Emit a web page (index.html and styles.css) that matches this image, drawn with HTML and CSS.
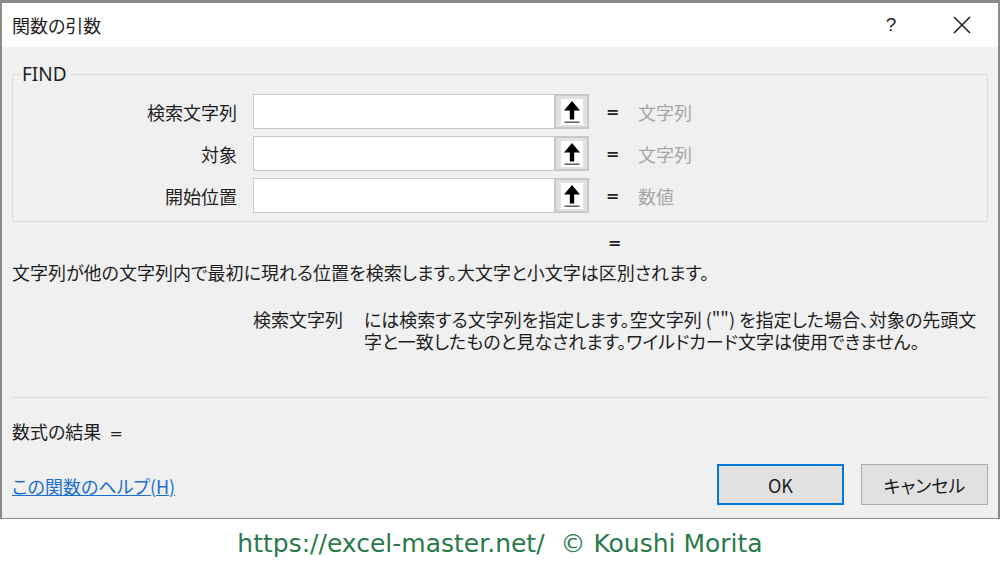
FILE: index.html
```html
<!DOCTYPE html>
<html lang="ja">
<head>
    <meta charset="UTF-8">
    <title>関数の引数</title>
    <link rel="stylesheet" href="styles.css">
</head>
<body>
    <div class="dialog">
        <div class="titlebar">
            <span class="title">関数の引数</span>
            <span class="help">?</span>
            <span class="close">
                <svg width="18" height="18" viewBox="0 0 18 18"><path d="M1 1L17 17M17 1L1 17" stroke="#222" stroke-width="1.6" fill="none"/></svg>
            </span>
        </div>
        <div class="content">
            <fieldset class="group">
                <legend>FIND</legend>
                <div class="arg-row">
                    <label>検索文字列</label>
                    <div class="field"><span class="box"></span><span class="ref-btn"><svg class="ref-icon" viewBox="0 0 22 26"><rect width="22" height="26" fill="#fff"/><path d="M11 2L3 11.5H8.8V20.5H13.2V11.5H19Z" fill="#000"/><rect x="3.5" y="22.5" width="15" height="1.4" fill="#555"/></svg></span></div>
                    <span class="eq">=</span>
                    <span class="type">文字列</span>
                </div>
                <div class="arg-row">
                    <label>対象</label>
                    <div class="field"><span class="box"></span><span class="ref-btn"><svg class="ref-icon" viewBox="0 0 22 26"><rect width="22" height="26" fill="#fff"/><path d="M11 2L3 11.5H8.8V20.5H13.2V11.5H19Z" fill="#000"/><rect x="3.5" y="22.5" width="15" height="1.4" fill="#555"/></svg></span></div>
                    <span class="eq">=</span>
                    <span class="type">文字列</span>
                </div>
                <div class="arg-row">
                    <label>開始位置</label>
                    <div class="field"><span class="box"></span><span class="ref-btn"><svg class="ref-icon" viewBox="0 0 22 26"><rect width="22" height="26" fill="#fff"/><path d="M11 2L3 11.5H8.8V20.5H13.2V11.5H19Z" fill="#000"/><rect x="3.5" y="22.5" width="15" height="1.4" fill="#555"/></svg></span></div>
                    <span class="eq">=</span>
                    <span class="type">数値</span>
                </div>
            </fieldset>

            <div class="total-eq">=</div>
            <p class="desc">文字列が他の文字列内で最初に現れる位置を検索します。大文字と小文字は区別されます。</p>

            <div class="arg-desc">
                <span class="arg-name">検索文字列</span>
                <span class="arg-text">には検索する文字列を指定します。空文字列 ("") を指定した場合、対象の先頭文字と一致したものと見なされます。ワイルドカード文字は使用できません。</span>
            </div>

            <div class="separator"></div>

            <div class="result">数式の結果 <span class="result-eq">=</span></div>

            <div class="footer-row">
                <a href="#" class="help-link">この関数のヘルプ(H)</a>
                <div class="buttons">
                    <button class="btn btn-default">OK</button>
                    <button class="btn">キャンセル</button>
                </div>
            </div>
        </div>
    </div>
    <div class="credit">https://excel-master.net/&nbsp; © Koushi Morita</div>
</body>
</html>
```

FILE: styles.css
```css
body {
    margin: 0;
    padding: 0;
    background-color: #fff;
    font-family: "Noto Sans CJK JP", "Noto Sans", sans-serif;
    font-feature-settings: "palt";
    color: #1e1e1e;
    width: 1000px;
    height: 563px;
    overflow: hidden;
}

.dialog {
    box-sizing: border-box;
    width: 1000px;
    height: 519px;
    border-top: 3px solid #8a8a8a;
    border-left: 2px solid #8a8a8a;
    border-right: 2px solid #8a8a8a;
    border-bottom: 1px solid #8a8a8a;
    background-color: #f0f0f0;
    display: flex;
    flex-direction: column;
}

.titlebar {
    height: 44px;
    background-color: #fff;
    display: flex;
    align-items: center;
    padding-left: 10px;
}

.title {
    font-size: 18px;
    flex: 1;
}

.help {
    font-family: "Liberation Sans", sans-serif;
    font-size: 19px;
    width: 20px;
    margin-right: 52px;
    text-align: center;
}

.close {
    width: 18px;
    height: 18px;
    margin-right: 27px;
    display: flex;
}

.content {
    flex: 1;
    padding: 0 10px;
    display: flex;
    flex-direction: column;
    font-size: 18px;
}

.group {
    margin: 16px 0 0 0;
    padding: 9px 0 8px 0;
    border: 1px solid #dcdcdc;
    display: flex;
    flex-direction: column;
    gap: 7px;
}

.group legend {
    font-family: "Noto Sans", sans-serif;
    font-size: 19px;
    line-height: 22px;
    padding: 0 2px;
    margin-left: 7px;
}

.arg-row {
    display: grid;
    grid-template-columns: 224px 336px 32px auto;
    column-gap: 16px;
    align-items: center;
    height: 35px;
}

.arg-row label {
    text-align: right;
}

.field {
    display: flex;
    height: 35px;
}

.box {
    flex: 1;
    background: #fff;
    border: 1px solid #c8c8c8;
    border-right: none;
}

.ref-btn {
    box-sizing: border-box;
    width: 35px;
    background: #e1e1e1;
    border: 2px solid #c8c8c8;
    display: flex;
    align-items: center;
    justify-content: center;
}

.ref-icon {
    width: 22px;
    height: 26px;
    flex-shrink: 0;
}

.eq {
    justify-self: start;
    font-family: "DejaVu Sans", sans-serif;
    font-weight: bold;
    font-size: 16px;
    margin-left: 1px;
}

.type {
    color: #a6a6a6;
    margin-left: -15px;
}

.total-eq {
    font-family: "DejaVu Sans", sans-serif;
    font-weight: bold;
    font-size: 16px;
    margin: 11px 0 0 596px;
    height: 22px;
}

.desc {
    margin: 6px 0 0 0;
    line-height: 22px;
}

.arg-desc {
    display: flex;
    margin-top: 25px;
    line-height: 22px;
}

.arg-name {
    width: 111px;
    margin-left: 241px;
    flex-shrink: 0;
}

.arg-text {
    flex: 1;
}

.separator {
    border-top: 1px solid #dcdcdc;
    margin-top: 45px;
}

.result {
    margin-top: 22px;
    line-height: 22px;
}

.result-eq {
    font-family: "DejaVu Sans", sans-serif;
    font-size: 16px;
    margin-left: 4px;
}

.footer-row {
    display: flex;
    align-items: center;
    justify-content: space-between;
    margin-top: 19px;
}

.help-link {
    color: #1a6fd6;
    text-decoration: underline;
    margin-top: 2px;
}

.buttons {
    display: flex;
    gap: 17px;
}

.btn {
    box-sizing: border-box;
    width: 127px;
    height: 41px;
    background: #e1e1e1;
    border: 1px solid #adadad;
    font-family: "Noto Sans CJK JP", sans-serif;
    font-feature-settings: "palt";
    font-size: 18px;
    color: #1e1e1e;
}

.btn-default {
    border: 2px solid #0078d7;
}

.credit {
    height: 44px;
    line-height: 50px;
    text-align: center;
    font-family: "DejaVu Sans", sans-serif;
    font-size: 25px;
    color: #2a7a4a;
}
```
